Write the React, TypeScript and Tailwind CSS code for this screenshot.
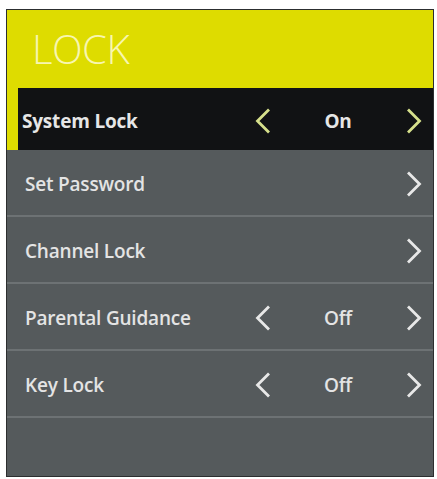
import type { ReactNode } from "react";

type Item = { label: string; value?: string };

const ITEMS: Item[] = [
  { label: "Set Password" },
  { label: "Channel Lock" },
  { label: "Parental Guidance", value: "Off" },
  { label: "Key Lock", value: "Off" },
];

function Chevron({ dir, color }: { dir: "left" | "right"; color: string }) {
  return (
    <svg width="16" height="26" viewBox="0 0 16 26" aria-hidden>
      <polyline
        points={dir === "left" ? "14,1.5 2.5,13 14,24.5" : "2,1.5 13.5,13 2,24.5"}
        fill="none"
        stroke={color}
        strokeWidth="2.8"
        strokeLinejoin="miter"
      />
    </svg>
  );
}

function Selector({ value, color }: { value?: string; color: string }) {
  return (
    <div className="flex items-center pr-[10px]">
      {value ? (
        <>
          <div className="flex w-[16px] justify-center">
            <Chevron dir="left" color={color} />
          </div>
          <div className="w-[134px] text-center">{value}</div>
        </>
      ) : null}
      <div className="flex w-[18px] justify-center">
        <Chevron dir="right" color={color} />
      </div>
    </div>
  );
}

function Row({ children }: { children: ReactNode }) {
  return (
    <div className="flex h-[67px] items-center border-b-2 border-[#6d7274] pt-[3px] pl-[18px]">
      {children}
    </div>
  );
}

export default function App() {
  return (
    <div
      className="h-[479px] w-[437px] bg-white pt-[9px] pl-[6px]"
      style={{ fontFamily: '"Open Sans", "Noto Sans", sans-serif' }}
    >
      <div className="flex h-[468px] w-[428px] flex-col border border-[#2c2e2f] bg-[#555a5c]">
        <div className="flex h-[78px] shrink-0 items-center bg-[#dedc00] pl-[25px]">
          <span className="text-[40px] font-light leading-none tracking-[-0.5px] text-[#f8f6b0]">
            LOCK
          </span>
        </div>

        <div className="flex h-[62px] shrink-0">
          <div className="w-[11px] bg-[#dedc00]" />
          <div className="flex flex-1 items-center bg-[#111214] pt-[4px] pl-[4px] text-[19px] font-bold tracking-[-0.2px] text-[#e6e6e6]">
            <div className="flex-1">System Lock</div>
            <Selector value="On" color="#d6e08c" />
          </div>
        </div>

        {ITEMS.map((item) => (
          <Row key={item.label}>
            <div className="flex flex-1 items-center text-[19px] font-semibold tracking-[-0.2px] text-[#e4e4e4]">
              <div className="flex-1">{item.label}</div>
              <Selector value={item.value} color="#e8e8e8" />
            </div>
          </Row>
        ))}
      </div>
    </div>
  );
}
